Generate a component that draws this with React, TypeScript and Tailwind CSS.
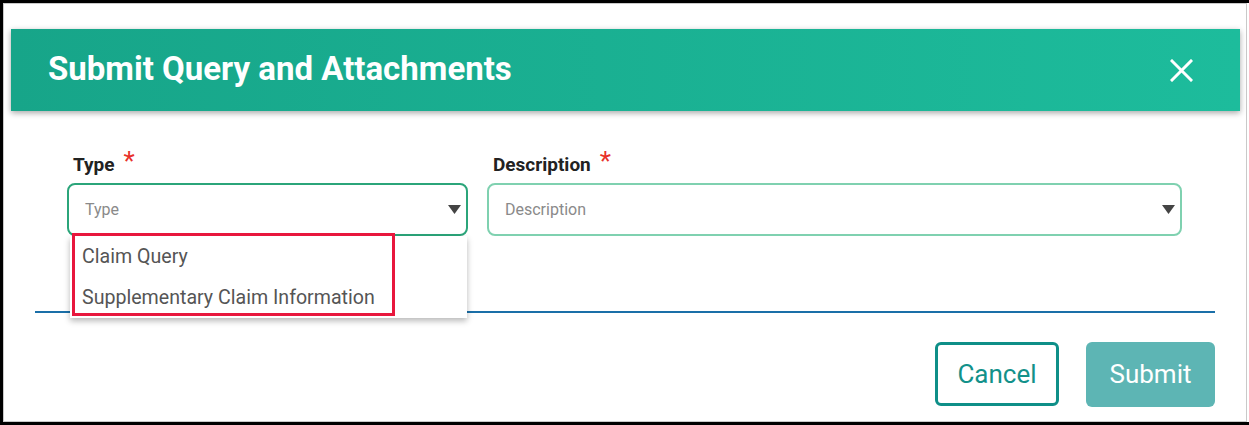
import React from 'react';

const font = { fontFamily: 'Roboto, "Liberation Sans", Arial, sans-serif' };

const Caret = () => (
  <svg width="13" height="9" viewBox="0 0 13 9" className="shrink-0">
    <path d="M0 0 H13 L6.5 9 Z" fill="#444" />
  </svg>
);

const CloseIcon = () => (
  <svg width="23" height="23" viewBox="0 0 23 23">
    <path d="M2 2 L21 21 M21 2 L2 21" stroke="#fff" strokeWidth="3" strokeLinecap="square" />
  </svg>
);

const Label = ({ text }: { text: string }) => (
  <div className="h-[31px] pl-[6px] pt-[1px] flex items-start">
    <span className="text-[19px] leading-[24px] font-bold text-[#222]">{text}</span>
    <span className="ml-[9px] -mt-[5px] text-[26px] leading-[26px] text-[#e8312a]">*</span>
  </div>
);

const typeOptions = ['Claim Query', 'Supplementary Claim Information'];

export default function App() {
  return (
    <div style={font} className="w-[1249px] h-[425px] bg-white border-t-[3px] border-l-[3px] border-b-[3px] border-black">
      <div className="h-full mr-[2px] border border-[#c9c9c9]">
        {/* modal header */}
        <div className="mt-[25px] ml-[7px] mr-[6px] h-[82px] pl-[37px] pr-[47px] flex items-center justify-between bg-gradient-to-r from-[#17a589] to-[#1dbc9c] shadow-[0_2px_6px_rgba(0,0,0,0.35)]">
          <h2 className="text-[33px] leading-[40px] -mt-[2px] font-bold text-white">Submit Query and Attachments</h2>
          <CloseIcon />
        </div>

        {/* fields */}
        <div className="mt-[41px] ml-[63px] flex gap-[19px]">
          <div className="w-[401px]">
            <Label text="Type" />
            <div className="relative">
              <div className="h-[53px] rounded-[8px] border-2 border-[#2ba57a] pl-[16px] pr-[5px] flex items-center justify-between">
                <span className="text-[16px] text-[#8a8a8a]">Type</span>
                <Caret />
              </div>
              <div className="absolute z-10 top-full left-[3px] w-[397px] bg-white shadow-[0_3px_6px_rgba(0,0,0,0.28)]">
                {typeOptions.map((o) => (
                  <div key={o} className="h-[41px] pl-[12px] flex items-center text-[19.6px] text-[#555]">
                    {o}
                  </div>
                ))}
                <div className="absolute -top-[3px] left-[2px] w-[323px] h-[83px] border-[3px] border-[#e8173d]" />
              </div>
            </div>
          </div>
          <div className="w-[695px]">
            <Label text="Description" />
            <div className="h-[53px] rounded-[8px] border-2 border-[#7fd1b0] pl-[16px] pr-[5px] flex items-center justify-between">
              <span className="text-[16px] text-[#8a8a8a]">Description</span>
              <Caret />
            </div>
          </div>
        </div>

        <div className="mt-[75px] ml-[31px] w-[1180px] h-[2px] bg-[#1a6fa8]" />

        {/* footer actions */}
        <div className="mt-[29px] ml-[31px] w-[1180px] flex justify-end gap-[27px]">
          <button className="w-[124px] h-[64px] rounded-[6px] border-[3px] border-[#0e8f88] text-[26px] text-[#12918a] bg-white">
            Cancel
          </button>
          <button className="w-[129px] h-[65px] rounded-[6px] bg-[#5db5b4] text-[26px] text-white">
            Submit
          </button>
        </div>
      </div>
    </div>
  );
}
